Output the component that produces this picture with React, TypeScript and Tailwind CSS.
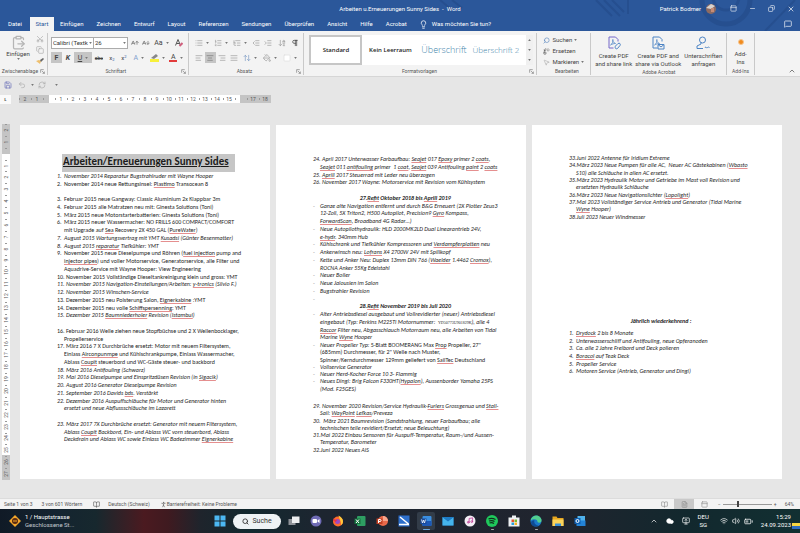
import React from "react";
import {
  AArrowDown, AArrowUp, AlignCenter, AlignJustify, AlignLeft, AlignRight, ArrowDownAZ, ArrowUpDown,
  ChevronUp, ClipboardPaste, Cloud, Copy, FileText, IndentDecrease, IndentIncrease, Lightbulb, List, ListOrdered,
  ListTree, MessageSquare, Minus, MousePointer2, Music, PaintBucket, Pilcrow, RefreshCw, Replace, Save, Scissors,
  Search, Square, Undo2, Volume2, Wifi, X, Copy as Restore, PanelTop, PersonStanding, BookOpen, BatteryMedium, MonitorUp,
} from "lucide-react";

type Item = { n?: string; i?: boolean; lines: string[] };

const pageOneItems: Item[] = [
  { n: "1.", i: true, lines: ["November 2014 Reparatur Bugstrahlruder mit Wayne Hooper"] },
  { n: "2.", lines: ["November 2014 neue Rettungsinsel: _Plastimo_ Transocean 8"] },
  { lines: [""] },
  { n: "3.", lines: ["Februar 2015 neue Gangway: Classic Aluminium 2x Klappbar 3m"] },
  { n: "4.", lines: ["Februar 2015 alle Matratzen neu mit: Ginesta Solutions (Toni)"] },
  { n: "5.", lines: ["März 2015 neue Motorstarterbatterien: Ginesta Solutions (Toni)"] },
  { n: "6.", lines: ["März 2015 neuer Wassermacher: NO FRILLS 600 COMPACT/COMFORT", "mit Upgrade auf _Sea_ Recovery 2X 450 GAL (_PureWater_)"] },
  { n: "7.", i: true, lines: ["August 2015 Wartungsvertrag mit YMT _Kusadsi_ (Günter Besenmatter)"] },
  { n: "8.", i: true, lines: ["August 2015 _reparatur_ Tiefkühler: YMT"] },
  { n: "9.", lines: ["November 2015 neue Dieselpumpe und Röhren (_fuel injection_ pump and", "_injector pipes_) und voller Motorservice, Generatorservice, alle Filter und", "Aquadrive-Service mit Wayne Hooper: View Engineering"] },
  { n: "10. ", lines: ["November 2015 Vollständige Dieseltankreinigung klein und gross: YMT"] },
  { n: "11. ", i: true, lines: ["November 2015 Navigation-Einstellungen/Arbeiten: _y-tronics_ (Silvio F.)"] },
  { n: "12. ", i: true, lines: ["November 2015 Winschen-Service"] },
  { n: "13. ", lines: ["Dezember 2015 neu Polsterung Salon, _Eignerkabine_ :YMT"] },
  { n: "14. ", lines: ["Dezember 2015 neu volle _Schiffspersenning_: YMT"] },
  { n: "15. ", i: true, lines: ["Dezember 2015 _Baumniederholer_ Revision (_Istambul_)"] },
  { lines: [""] },
  { n: "16. ", lines: ["Februar 2016 Welle ziehen neue Stopfbüchse und 2 X Wellenbocklager,", "Propellerservice"] },
  { n: "17. ", lines: ["März 2016 7 X Durchbrüche ersetzt: Motor mit neuem Filtersystem,", "Einlass _Airconpunmpe_ und Kühlschrankpumpe, Einlass Wassermacher,", "Ablass _Coupit_ steuerbord und WC-Gäste steuer- und backbord"] },
  { n: "18. ", i: true, lines: ["März 2016 Antifouling (Schwarz)"] },
  { n: "19. ", i: true, lines: ["Mai 2016 Dieselpumpe und Einspritzdüsen Revision (in _Sigacik_)"] },
  { n: "20. ", i: true, lines: ["August 2016 Generator Dieselpumpe Revision"] },
  { n: "21. ", i: true, lines: ["September 2016 Davids _bds_. Verstärkt"] },
  { n: "22. ", i: true, lines: ["Dezember 2016 Auspuffschläuche für Motor und Generator hinten", "ersetzt und neue Abflussschläuche im Lazarett"] },
  { lines: [""] },
  { n: "23. ", i: true, lines: ["März 2017 7X Durchbrüche ersetzt: Generator mit neuem Filtersystem,", "Ablass _Coupit_ Backbord, Ein- und Ablass WC vorn steuerbord, Ablass", "Deckdrain und Ablass WC sowie Einlass WC Badezimmer _Eignerkabine_"] },
];

const antifoulingItems: Item[] = [
  { n: "24. ", i: true, lines: ["April 2017 Unterwasser Farbaufbau: _Seajet_ 017 _Epoxy_ primer 2 _coats_,", "_Seajet_ 011 _antifouling_ primer  1 _coat_, _Seajet_ 039 Antifouling _paint_ 2 _coats_"] },
  { n: "25. ", i: true, lines: ["_Aprill_ 2017 Steuerrad mit Leder neu überzogen"] },
  { n: "26. ", i: true, lines: ["November 2017 Wayne: Motorservice mit Revision vom Kühlsystem"] },
];

const refit2018: Item[] = [
  { n: "-", i: true, lines: ["Ganze alte Navigation entfernt und durch B&G Erneuert (2X Plotter Zeus3", "12-Zoll, 5X Triton2, H500 Autopilot, Precision9 _Gyro_ Kompass,", "_ForwardScan_, Broadband 4G Radar…)"] },
  { n: "-", i: true, lines: ["Neue Autopilothydraulik: HLD 2000MK2LD Dual Linearantrieb 24V,", "_e-hydr_. 340mm Hub"] },
  { n: "-", i: true, lines: ["Kühlschrank und Tiefkühler Kompressoren und _Verdampferplatten_ neu"] },
  { n: "-", i: true, lines: ["Ankerwinsch neu: _Lofrans_ X4 2700W 24V mit Spillkopf"] },
  { n: "-", i: true, lines: ["Kette und Anker Neu: Duplex 13mm DIN 766 (_Waelder_ 1.4462 _Cromox_),", "ROCNA Anker 55Kg Edelstahl"] },
  { n: "-", i: true, lines: ["Neuer Boiler"] },
  { n: "-", i: true, lines: ["Neue Jalousien im Salon"] },
  { n: "-", i: true, lines: ["Bugstrahler Revision"] },
  { n: "-", lines: [""] },
];

const refit2019: Item[] = [
  { n: "-", i: true, lines: ["Alter Antriebsdiesel ausgebaut und Vollrevidierter (neuer) Antriebsdiesel", "eingebaut (Typ: Perkins M225Ti Motornummer:  ~YD50773U901829K~), alle 4", "_Raccor_ Filter neu, Abgasschlauch Motorraum neu, alle Arbeiten von Tidal", "Marine _Wyne_ Hooper"] },
];

const refit2019Rest: Item[] = [
  { n: "-", lines: ["*Neuer Propeller Typ:* 5-Blatt BOOMERANG Max _Prop_ Propeller, 27\"", "(685mm) Durchmesser, für 2\" Welle nach Muster,", "Spinner/Kerndurchmesser 129mm geliefert von _SailTec_ Deutschland"] },
  { n: "-", i: true, lines: ["Vollservice Generator"] },
  { n: "-", i: true, lines: ["Neuer Herd-Kocher Force 10 3- Flammig"] },
  { n: "-", i: true, lines: ["Neues Dingi: Brig Falcon F330HT(_Hypalon_), Aussenborder Yamaha 25PS", "(Mod. F25GES)"] },
];

const lateItems: Item[] = [
  { n: "29. ", i: true, lines: ["November 2020 Revision/Service Hydraulik-_Furlers_ Grossgenua und _Stall-_", "Sail: _WayPoint_ _Lefkas_/Preveza"] },
  { n: "30. ", i: true, lines: [" März 2021 Baumrevision (Sandstrahlung, neuer Farbaufbau; alle", "technischen teile revidiert/Ersetzt; neue Beleuchtung)"] },
  { n: "31.", i: true, lines: ["Mai 2022 Einbau Sensoren für Auspuff-Temperatur, Raum-/und Aussen-", "Temperatur, Barometer"] },
  { n: "32.", i: true, lines: ["Juni 2022 Neues AIS"] },
];

const pageThreeItems: Item[] = [
  { n: "33.", i: true, lines: ["Juni 2022 Antenne für Iridium Extreme"] },
  { n: "34.", i: true, lines: ["März 2023 Neue Pumpen für alle AC,  Neuer AC Gästekabinen (_Wbasto_", "S10) alle Schläuche in allen AC ersetzt."] },
  { n: "35.", i: true, lines: ["März 2023 Hydraulik Motor und Getriebe im Mast voll Revision und", "ersetzten Hydraulik Schläuche"] },
  { n: "36.", i: true, lines: ["März 2023 Neue Navigationslichter (_Lopolight_)"] },
  { n: "37.", i: true, lines: ["Mai 2023 Vollständiger Service Antrieb und Generator (Tidal Marine", "_Wyne_ Hooper)"] },
  { n: "38.", i: true, lines: ["Juli 2023 Neuer Windmesser"] },
];

const yearly: Item[] = [
  { n: "1.", i: true, lines: ["_Drydock_ 2 bis 8 Monate"] },
  { n: "2.", i: true, lines: ["Unterwasserschliff und Antifouling, neue Opferanoden"] },
  { n: "3.", i: true, lines: ["Ca. alle 2 Jahre Freibord und Deck polieren"] },
  { n: "4.", i: true, lines: ["_Boracol_ auf Teak Deck"] },
  { n: "5.", i: true, lines: ["Propeller Service"] },
  { n: "6.", i: true, lines: ["Motoren Service (Antrieb, Generator und Dingi)"] },
];

/* _word_ is flagged by the spell checker, *text* is italic, ~text~ is fine print */
function Marked({ text }: { text: string }) {
  return (
    <>
      {text.split(/(_[^_]+_|\*[^*]+\*|~[^~]+~)/).map((part, k) => {
        if (part.startsWith("_")) return <span key={k} className="underline decoration-[#e58f8f] decoration-1 underline-offset-1">{part.slice(1, -1)}</span>;
        if (part.startsWith("*")) return <em key={k}>{part.slice(1, -1)}</em>;
        if (part.startsWith("~")) return <small key={k} className="font-['Liberation_Serif',serif] text-[4px] not-italic">{part.slice(1, -1)}</small>;
        return part;
      })}
    </>
  );
}

function Lines({ items }: { items: Item[] }) {
  return (
    <>
      {items.map((item, k) => (
        <li key={k} className={item.i ? "contents italic" : "contents"}>
          {item.lines.map((line, j) => (
            <span key={j} className="flex whitespace-pre">
              <span className={item.n === "-" ? "min-w-[7px] text-[#999]" : "min-w-[7px]"}>{j === 0 ? item.n : ""}</span>
              <span><Marked text={line} /></span>
            </span>
          ))}
        </li>
      ))}
    </>
  );
}

function Heading({ children }: { children: React.ReactNode }) {
  return <li className="text-center font-bold italic whitespace-pre">{children}</li>;
}

function Sheet({ children }: { children: React.ReactNode }) {
  return (
    <article className="h-[354px] w-[250px] shrink-0 bg-white pr-[29px] pl-[37px] font-['Carlito','Calibri','Lato',sans-serif] text-[6px] leading-[8px] text-[#262626]">
      {children}
    </article>
  );
}

function Caret() {
  return <svg viewBox="0 0 4 3" className="h-[2px] w-[3px] shrink-0 fill-[#777]"><path d="M0 0h4L2 3z" /></svg>;
}

function Tool({ label, on, children, className = "" }: { label: string; on?: boolean; children: React.ReactNode; className?: string }) {
  return (
    <button aria-label={label} className={`flex h-[11px] items-center justify-center gap-[3px] ${on ? "bg-[#c5c5c5]" : ""} ${className}`}>
      {children}
    </button>
  );
}

function Group({ title, launcher, className = "", children }: { title: string; launcher?: boolean; className?: string; children: React.ReactNode }) {
  return (
    <section aria-label={title} className={`flex flex-col border-r border-[#c9c9c9] ${className}`}>
      <div className="flex-1">{children}</div>
      <div className="flex h-2 items-center justify-center text-[5px] leading-[8px] text-[#555]">
        <span className="flex-1 text-center whitespace-nowrap">{title}</span>
        {launcher && (
          <svg viewBox="0 0 8 8" className="mr-[2px] h-[5px] w-[5px] fill-none stroke-[#777]"><path d="M1 6V1h5M3 3l4 4M7 4v3H4" /></svg>
        )}
      </div>
    </section>
  );
}

const ic = "h-2 w-2 shrink-0";

function PdfIcon({ kind }: { kind: "link" | "mail" | "sign" }) {
  return (
    <svg viewBox="0 0 28 28" className="h-[14px] w-[14px] fill-none stroke-[#4d84c4]" strokeWidth="2">
      {kind === "sign" ? (
        <><circle cx="13" cy="8" r="6" /><path d="M10 13v3l-8 4v5h12M18 24c2-5 3 2 5-1s2 1 4 0" /></>
      ) : (
        <>
          <path d="M22 11V7l-5-5H4v22h9" className={kind === "link" ? "stroke-[#7468c9]" : ""} />
          <path d="M7 18c4-3 6-8 5-11-2 0-1 6 5 8-3 0-7 1-10 3z" strokeWidth="1.5" />
          {kind === "link" ? <path d="M16 21l6-6c3-2 6 1 4 4l-5 6c-3 2-6-1-4-4" /> : <path d="M14 17h12v9H14zM14 17l6 5 6-5" />}
        </>
      )}
    </svg>
  );
}

function Acro({ a, b, kind }: { a: string; b: string; kind: "link" | "mail" | "sign" }) {
  return (
    <button className="flex flex-col items-center whitespace-nowrap">
      <PdfIcon kind={kind} />
      <span className="mt-[2px] leading-[8px]">{a}<br />{b}</span>
    </button>
  );
}

const tabs = ["Einfügen", "Zeichnen", "Entwurf", "Layout", "Referenzen", "Sendungen", "Überprüfen", "Ansicht", "Hilfe", "Acrobat"];

function TitleBar() {
  return (
    <header className="relative h-[31px] bg-[#2b579a] text-white">
      <svg aria-hidden viewBox="0 0 400 31" className="absolute top-0 right-0 h-[31px] w-[400px] fill-none stroke-[#264f8f]">
        <circle cx="326" cy="0" r="24" strokeWidth="5" /><circle cx="326" cy="-3" r="13" strokeWidth="3" />
        <path d="M196 0l16 16M204 0l16 16M212 0l12 12M228 0v14M40 0l12 10M52 0l10 8M365 31l30-31" strokeWidth="2" />
      </svg>
      <div className="relative grid h-[17px] grid-cols-[1fr_auto_1fr] items-center">
        <span />
        <h1 className="whitespace-pre">Arbeiten u.Erneuerungen Sunny Sides  -  Word</h1>
        <div className="flex items-center justify-end pr-[5px]">
          <span className="mr-[5px]">Patrick Bodmer</span>
          <svg viewBox="0 0 10 10" className="mr-[14px] h-[10px] w-[10px]"><circle cx="5" cy="5" r="5" fill="#8d6b62" /><path d="M0 4l5-4 4 2-4 3z" fill="#d8d3cf" /><path d="M5 4h3v4H5z" fill="#c58d78" /></svg>
          <div className="flex gap-[12px]">
            <button aria-label="Menüband-Anzeigeoptionen"><PanelTop className="h-[7px] w-[7px]" /></button>
            <button aria-label="Minimieren"><Minus className="h-[7px] w-[7px]" /></button>
            <button aria-label="Verkleinern"><Restore className="h-[7px] w-[7px] rotate-90" /></button>
            <button aria-label="Schliessen"><X className="h-[8px] w-[8px]" /></button>
          </div>
        </div>
      </div>
      <nav className="relative flex h-[14px] items-center">
        <button className="w-[30px] text-center">Datei</button>
        <button className="mr-[6px] h-full w-6 bg-[#f4f4f4] text-[#2b579a]">Start</button>
        <div className="flex gap-[13px]">{tabs.map((t) => <button key={t}>{t}</button>)}</div>
        <button className="ml-3 flex items-center gap-1"><Lightbulb className="h-[9px] w-[9px]" />Was möchten Sie tun?</button>
        <button aria-label="Kommentare" className="mr-2 ml-auto"><MessageSquare className="h-2 w-2" /></button>
      </nav>
    </header>
  );
}

function Ribbon() {
  return (
    <div className="flex h-[46px] border-b border-[#d6d6d6] bg-[#f3f3f3] pt-[2px] pb-px text-[#444]">
      <Group title="Zwischenablage" launcher className="w-12">
        <div className="flex pt-[2px]">
          <button className="flex w-9 flex-col items-center"><ClipboardPaste className="h-[15px] w-[15px] text-[#b5b5b5]" strokeWidth={2} /><span>Einfügen</span><Caret /></button>
          <div className="flex flex-col gap-[3px] text-[#aaa]">
            <button aria-label="Ausschneiden"><Scissors className="h-2 w-2 -rotate-90" /></button>
            <button aria-label="Kopieren"><Copy className={ic} /></button>
            <button aria-label="Format übertragen">
              <svg viewBox="0 0 8 8" className="h-2 w-2"><path d="M0 4l4 3 1-3-2-1z" fill="#eebf6d" /><path d="M4 3l3-2 1 1-3 3z" fill="#666" /></svg>
            </button>
          </div>
        </div>
      </Group>
      <Group title="Schriftart" launcher className="w-[141px] pl-[3px]">
        <div className="flex h-[15px] items-center pt-[5px]">
          <label className="relative flex items-center"><span className="sr-only">Schriftart</span>
            <select className="h-3 w-[43px] appearance-none border border-[#ababab] bg-white pl-px text-[#333]"><option>Calibri (Textk</option></select>
            <span className="absolute right-[2px]"><Caret /></span>
          </label>
          <label className="relative -ml-px flex items-center"><span className="sr-only">Schriftgrad</span>
            <select className="h-3 w-[35px] appearance-none border border-[#ababab] bg-white pl-px text-[#333]"><option>26</option></select>
            <span className="absolute right-[2px]"><Caret /></span>
          </label>
          <Tool label="Schrift vergrössern" className="ml-[2px] w-[11px] text-[#666]"><AArrowUp className={ic} /></Tool>
          <Tool label="Schrift verkleinern" className="w-[11px] text-[#666]"><AArrowDown className={ic} /></Tool>
          <Tool label="Gross-/Kleinschreibung" className="w-[19px]"><span className="text-[7px]">Aa</span><Caret /></Tool>
          <Tool label="Formatierung löschen" className="ml-[3px] w-[11px]"><svg viewBox="0 0 16 16" className="h-2 w-2 fill-none" strokeWidth="2"><path d="M1 13L6 1l5 12M3 9h6" stroke="#555" /><path d="M9 14l6-6" stroke="#cf5f7d" strokeWidth="4" /></svg></Tool>
        </div>
        <div className="mt-[4px] flex h-[11px] items-center">
          <Tool label="Fett" on className="w-[11px] text-[7px] font-bold">F</Tool>
          <Tool label="Kursiv" className="w-3 text-[7px] font-bold italic">K</Tool>
          <Tool label="Unterstrichen" on className="w-[18px]"><span className="text-[7px] underline">U</span><Caret /></Tool>
          <Tool label="Durchgestrichen" className="w-[14px] text-[5px] line-through">abc</Tool>
          <Tool label="Tiefgestellt" className="w-3"><span>x<sub className="text-[4px] text-[#2b579a]">2</sub></span></Tool>
          <Tool label="Hochgestellt" className="w-3"><span>x<sup className="text-[4px] text-[#2b579a]">2</sup></span></Tool>
          <Tool label="Texteffekte" className="w-[18px]"><span className="text-[7px] text-[#7f9fce]">A</span><Caret /></Tool>
          <Tool label="Texthervorhebung" className="w-[19px]"><svg viewBox="0 0 9 9" className="h-[9px] w-[9px]"><path d="M0 6h9v3H0z" fill="#f7f03a" /><path d="M1 5l5-4 2 2-4 3z" fill="#888" /></svg><Caret /></Tool>
          <Tool label="Schriftfarbe" className="w-[19px]"><span className="flex h-[9px] w-2 items-center justify-center border-b-2 border-[#e23b3b] text-[7px]">A</span><Caret /></Tool>
        </div>
      </Group>
      <Group title="Absatz" launcher className="w-[116px] pl-1">
        <div className="flex h-[15px] items-center pt-[5px] text-[#999]">
          <Tool label="Aufzählung" className="w-[19px]"><List className={ic} /><Caret /></Tool>
          <Tool label="Nummerierung" className="w-[19px]"><ListOrdered className={ic} /><Caret /></Tool>
          <Tool label="Liste mit mehreren Ebenen" className="w-[19px]"><ListTree className={ic} /><Caret /></Tool>
          <Tool label="Einzug verkleinern" className="w-3"><IndentDecrease className={ic} /></Tool>
          <Tool label="Einzug vergrössern" className="w-3"><IndentIncrease className={ic} /></Tool>
          <Tool label="Sortieren" className="ml-[2px] w-3"><ArrowDownAZ className={ic} /></Tool>
          <Tool label="Absatzmarken" className="ml-px w-3 text-[#333]"><Pilcrow className={ic} /></Tool>
        </div>
        <div className="mt-[4px] flex h-[11px] items-center text-[#999]">
          <Tool label="Linksbündig" className="w-3"><AlignLeft className={ic} /></Tool>
          <Tool label="Zentriert" on className="w-[11px] text-[#777]"><AlignCenter className={ic} /></Tool>
          <Tool label="Rechtsbündig" className="w-3"><AlignRight className={ic} /></Tool>
          <Tool label="Blocksatz" className="w-3"><AlignJustify className={ic} /></Tool>
          <Tool label="Zeilenabstand" className="w-[20px] text-[#7c9bc4]"><ArrowUpDown className={ic} /><Caret /></Tool>
          <Tool label="Schattierung" className="w-[20px]"><PaintBucket className={ic} /><Caret /></Tool>
          <Tool label="Rahmen" className="w-[20px]"><Square className="h-2 w-2 fill-white text-[#ddd]" /><Caret /></Tool>
        </div>
      </Group>
      <Group title="Formatvorlagen" launcher className="min-w-[233px] flex-1 pl-[5px]">
        <div className="mt-[2px] mr-[3px] flex h-[30px] items-center bg-white font-['Open_Sans',sans-serif]">
          <button className="h-full w-[53px] border-2 border-[#c6c6c6] font-semibold text-[#222]">Standard</button>
          <button className="w-[56px] font-semibold text-[#222]">Kein Leerraum</button>
          <button className="w-[51px] text-[9px] font-light text-[#3f86ab]">Überschrift</button>
          <button className="w-[53px] text-[8px] font-light whitespace-nowrap text-[#3f86ab]">Überschrift 2</button>
          <div className="ml-auto flex h-full w-[7px] flex-col justify-around bg-[#f0f0f0] text-center">
            <button aria-label="Nach oben" className="flex h-2 rotate-180 items-center justify-center"><Caret /></button>
            <button aria-label="Nach unten" className="flex h-2 items-center justify-center"><Caret /></button>
            <button aria-label="Mehr" className="flex h-2 items-center justify-center"><Caret /></button>
          </div>
        </div>
      </Group>
      <Group title="Bearbeiten" className="w-[54px] pl-[6px]">
        <div className="flex flex-col items-start gap-[3px] pt-[3px] leading-[8px]">
          <button className="flex items-center gap-[2px]"><Search className="h-[7px] w-[7px] -scale-x-100 text-[#4f7fbb]" />Suchen<Caret /></button>
          <button className="flex items-center gap-[2px]"><Replace className="h-[7px] w-[7px]" />Ersetzen</button>
          <button className="flex items-center gap-[2px]"><MousePointer2 className="h-[7px] w-[7px] text-[#aaa]" />Markieren<Caret /></button>
        </div>
      </Group>
      <Group title="Adobe Acrobat" className="w-[136px]">
        <div className="flex justify-center gap-[3px] pt-[3px]">
          <Acro a="Create PDF" b="and share link" kind="link" />
          <Acro a="Create PDF and" b="share via Outlook" kind="mail" />
          <Acro a="Unterschriften" b="anfragen" kind="sign" />
        </div>
      </Group>
      <Group title="Add-Ins" className="w-[28px]">
        <button className="flex w-full flex-col items-center pt-[6px] leading-[8px]">
          <span className="mb-[5px] h-[6px] w-[6px] rounded-full border border-[#f6c48c] bg-[#f08a1d]" />
          <span>Add-<br />Ins</span>
        </button>
      </Group>
      <div className="flex w-[45px] items-end justify-end pr-1"><button aria-label="Menüband reduzieren"><ChevronUp className="h-2 w-2" /></button></div>
    </div>
  );
}

const rulerColumns = ["2", "1", "", "1", "2", "3", "4", "5", "6", "7", "8", "9", "10", "11", "12", "13", "14", "15", "", "17", "18"];
const rulerRows = ["2", "1", "", ...Array.from({ length: 27 }, (_, k) => String(k + 1))];

function HorizontalRuler() {
  return (
    <div className="flex h-3 items-center text-[5px] leading-[8px] text-[#555]">
      <div className="flex h-[9px] w-[11px] items-center justify-center bg-[#fafafa] font-bold">ʟ</div>
      <div className="ml-2 flex h-2 bg-[linear-gradient(90deg,#c4c4c4_30px,#fff_30px,#fff_221px,#c4c4c4_221px)]">
        {rulerColumns.map((n, k) => (
          <span key={k} className="relative w-3 text-center">{n}
            <span className="absolute top-[3px] left-0 h-[2px] w-px bg-[#999]" />
          </span>
        ))}
      </div>
    </div>
  );
}

function VerticalRuler() {
  return (
    <div className="mt-[19px] ml-[2px] grid h-[356px] w-2 shrink-0 auto-rows-fr bg-[linear-gradient(180deg,#c4c4c4_30px,#fff_30px,#fff_331px,#c4c4c4_331px)] text-[5px] leading-[8px] text-[#555]">
      {rulerRows.map((n, k) => (
        <span key={k} className="relative flex items-center justify-center">
          <span className="-rotate-90">{n}</span>
          <span className="absolute top-0 left-[3px] h-px w-[2px] bg-[#999]" />
        </span>
      ))}
    </div>
  );
}

function StatusBar() {
  return (
    <footer className="flex h-[11px] items-center border-t border-[#dcdcdc] bg-[#f3f3f3] pl-1 text-[5px] text-[#555]">
      <span className="mr-[9px]">Seite 1 von 3</span>
      <span className="mr-[11px]">3 von 601 Wörtern</span>
      <BookOpen className="mr-[8px] h-[7px] w-[7px]" />
      <span className="mr-[10px]">Deutsch (Schweiz)</span>
      <PersonStanding className="h-[7px] w-[7px]" />
      <span>Barrierefreiheit: Keine Probleme</span>
      <div className="ml-auto flex h-full items-center">
        <button aria-label="Lesemodus" className="flex h-full w-5 items-center justify-center text-[#888]"><BookOpen className="h-[7px] w-[7px]" /></button>
        <button aria-label="Seitenlayout" className="flex h-full w-5 items-center justify-center bg-[#c9c9c9] text-[#888]"><FileText className="h-[7px] w-[7px]" /></button>
        <button aria-label="Weblayout" className="mr-1 flex h-full w-5 items-center justify-center text-[#888]"><PanelTop className="h-[7px] w-[7px]" /></button>
        <button aria-label="Verkleinern">−</button>
        <input type="range" aria-label="Zoom" min={0} max={100} defaultValue={30}
          className="mx-[2px] h-[7px] w-[49px] appearance-none bg-[linear-gradient(#999,#999)] bg-[length:100%_1px] bg-center bg-no-repeat [&::-webkit-slider-thumb]:h-[6px] [&::-webkit-slider-thumb]:w-[2px] [&::-webkit-slider-thumb]:appearance-none [&::-webkit-slider-thumb]:bg-[#444]" />
        <button aria-label="Vergrössern">+</button>
        <span className="mr-[6px] ml-[8px]">64%</span>
      </div>
    </footer>
  );
}

function AppIcon({ label, active, running, children }: { label: string; active?: boolean; running?: boolean; children: React.ReactNode }) {
  return (
    <button aria-label={label} className={`relative flex h-[18px] w-[18px] items-center justify-center rounded-xs ${active ? "bg-[#323c48]" : ""}`}>
      <svg viewBox="0 0 24 24" className="h-3 w-3">{children}</svg>
      {active && <span className="absolute bottom-0 h-px w-[7px] rounded-full bg-[#6aa6dc]" />}
      {running && <span className="absolute bottom-0 h-px w-[3px] rounded-full bg-[#aaa]" />}
    </button>
  );
}

function Taskbar() {
  return (
    <div className="grid h-6 grid-cols-[211px_auto_1fr] items-center bg-[linear-gradient(90deg,#101a26_0%,#142430_7%,#17282e_12%,#4b1a20_18%,#3f1a20_21%,#1f242c_25%,#12292f_31%,#1d2530_40%,#20242e_70%,#12282e_86%,#123032_100%)] text-white">
      <div className="flex items-center gap-1 pl-[9px]">
        <svg viewBox="0 0 12 12" className="h-3 w-3"><path d="M6 0l6 6-6 6-6-6z" fill="#f2a62b" /><circle cx="6" cy="6" r="3" fill="#5a2a12" /><path d="M4 6h4" stroke="#f2a62b" /></svg>
        <p className="leading-[8px] whitespace-nowrap">1 / Hauptstrasse<br /><span className="text-[#c5cad0]">Geschlossene St...</span></p>
      </div>
      <div className="flex items-center gap-[4px]">
        <AppIcon label="Start"><path d="M1 1h10v10H1zM13 1h10v10H13zM1 13h10v10H1zM13 13h10v10H13z" fill="#4cb8f2" /></AppIcon>
        <button className="flex h-[15px] w-12 items-center justify-center gap-[3px] rounded-full bg-[#eef3f5] text-[7px] text-[#333]"><Search className="h-[7px] w-[7px]" strokeWidth={3} />Suche</button>
        <AppIcon label="Taskansicht"><path d="M1 8h14v12H1z" fill="#8e9298" /><path d="M8 3h15v13H8z" fill="#eceef0" /></AppIcon>
        <AppIcon label="Chat"><circle cx="12" cy="12" r="11" fill="#6f6bb5" /><rect x="5" y="8" width="9" height="8" rx="2" fill="#fff" /><path d="M15 11l4-3v8l-4-3z" fill="#fff" /></AppIcon>
        <AppIcon label="Firefox"><circle cx="12" cy="13" r="10" fill="#ff6a2c" /><path d="M13 1c6 3 9 7 9 12 0 3-2 6-4 7 1-8-3-10-5-19z" fill="#ffc83c" /><circle cx="11" cy="13" r="5" fill="#9a4bc4" /><path d="M3 5c1 5 4 4 8 5-2 1-3 2-3 4l-5-2z" fill="#e8304c" /></AppIcon>
        <AppIcon label="Excel"><rect x="6" y="2" width="17" height="20" rx="2" fill="#2e9e62" /><rect x="1" y="7" width="12" height="11" fill="#15713d" /><path d="M4 9l6 7M10 9l-6 7" stroke="#fff" strokeWidth="2" /></AppIcon>
        <AppIcon label="PowerPoint"><circle cx="14" cy="12" r="10" fill="#e8694a" /><path d="M14 2a10 10 0 0 1 10 10H14z" fill="#f7a58c" /><rect x="1" y="7" width="12" height="11" fill="#c13f22" /><path d="M5 16V9h3c3 0 3 4 0 4H5" stroke="#fff" strokeWidth="2" fill="none" /></AppIcon>
        <AppIcon label="Scanner"><path d="M1 1h22v22H1z" fill="#2d6fcb" /><path d="M4 4l17 14M2 19h20" stroke="#fff" strokeWidth="3" /></AppIcon>
        <AppIcon label="Word" active><rect x="5" y="2" width="18" height="20" rx="2" fill="#3a8ee0" /><path d="M5 12h18v8a2 2 0 0 1-2 2H5z" fill="#1c58b5" /><rect x="1" y="7" width="12" height="11" fill="#174a9c" /><path d="M3 9l2 7 2-6 2 6 2-7" stroke="#fff" strokeWidth="1.5" fill="none" /></AppIcon>
        <AppIcon label="Mail"><path d="M1 4h22v17H1z" fill="#1b6fb8" /><path d="M1 4l11 9 11-9v17H1z" fill="#45b4ec" /><path d="M1 4h22l-11 8z" fill="#1d7cc6" /></AppIcon>
        <AppIcon label="iTunes"><circle cx="12" cy="12" r="11" fill="#f3eef5" /><Music x="5" y="4" width="14" height="14" color="#c2479d" strokeWidth={3} /></AppIcon>
        <AppIcon label="Spotify" running><circle cx="12" cy="12" r="12" fill="#1fc95c" /><path d="M5 8c5-2 10-1 14 1M6 12c4-1 8-1 11 1M7 16c3-1 6-1 9 1" stroke="#10301c" strokeWidth="2.5" fill="none" /></AppIcon>
        <AppIcon label="Microsoft Store"><path d="M1 5h22v18H1zM8 1h8v4H8z" fill="#eef1f3" /><path d="M7 9h5v5H7z" fill="#e8512c" /><path d="M13 9h5v5h-5z" fill="#7db82c" /><path d="M7 15h5v5H7z" fill="#2aa0da" /><path d="M13 15h5v5h-5z" fill="#f4b52a" /></AppIcon>
        <AppIcon label="Edge" running><circle cx="12" cy="12" r="11" fill="#1a78c8" /><path d="M1 11C3 3 9 0 15 1c6 2 9 7 8 11-1 4-6 4-8 2 1-5-7-8-14-3z" fill="#52cf8f" /><path d="M9 11c-2 5 2 10 8 10-6 4-14 1-15-5 0-4 4-6 7-5z" fill="#0e4b94" /></AppIcon>
        <AppIcon label="Explorer"><path d="M1 3h8l2 3h12v16H1z" fill="#e8a61f" /><path d="M1 9h22v13H1z" fill="#fbd45c" /><path d="M6 17h12v5H6z" fill="#3a8fd8" /></AppIcon>
        <AppIcon label="Outlook"><rect x="7" y="2" width="15" height="12" fill="#4fb2ec" /><path d="M5 11h18v11H5z" fill="#2383d6" /><rect x="1" y="6" width="12" height="12" fill="#0f5fb0" /><circle cx="7" cy="12" r="3" stroke="#fff" strokeWidth="2" fill="none" /></AppIcon>
      </div>
      <div className="flex items-center justify-end pr-1 text-center leading-[8px]">
        <ChevronUp className="mr-2 h-2 w-2" />
        <Cloud className="mr-2 h-2 w-2 fill-white" />
        <MonitorUp className="mr-2 h-2 w-2" />
        <span className="mr-[11px]">DEU<br />SG</span>
        <Wifi className="mr-1 h-2 w-2" />
        <Volume2 className="mr-1 h-2 w-2" />
        <BatteryMedium className="mr-2 h-[9px] w-[9px]" />
        <div className="relative pr-[5px] text-right">15:29<br />24.09.2023
          <svg viewBox="0 0 8 6" className="absolute -right-1 bottom-0 h-[6px] w-2"><path d="M0 0h8v3H0z" fill="#f6d743" /><path d="M0 3h8v3H0z" fill="#2d6fc4" /></svg>
        </div>
      </div>
    </div>
  );
}

export default function App() {
  return (
    <div className="flex min-h-screen flex-col bg-[#e6e6e6] font-['Roboto','Open_Sans',sans-serif] text-[6px] leading-[8px]">
      <TitleBar />
      <Ribbon />
      <div className="flex h-4 items-center pl-1 text-[#aaa]">
        <button aria-label="Speichern" className="mr-[6px]"><Save className="h-2 w-2 text-[#6a70b8]" /></button>
        <button aria-label="Rückgängig" className="mr-[5px]"><Undo2 className="h-2 w-2" /></button>
        <Caret />
        <button aria-label="Wiederholen" className="mx-[4px]"><RefreshCw className="h-2 w-2" /></button>
        <span className="ml-[5px]"><Caret /></span>
      </div>
      <HorizontalRuler />
      <main className="flex flex-1 overflow-hidden">
        <VerticalRuler />
        <div className="flex gap-[6px] pt-5 pb-[19px] pl-[10px]">
          <Sheet>
            <div className="pt-[29px]">
              <h2 className="ml-[5px] h-[18px] w-[173px] bg-[#c6c6c6] pl-px text-[11px] leading-[15px] font-bold whitespace-nowrap text-[#1c1c1c] underline">Arbeiten/Erneuerungen Sunny Sides</h2>
              <ol className="grid h-[271px] auto-rows-fr"><Lines items={pageOneItems} /></ol>
            </div>
          </Sheet>
          <Sheet>
            <ol className="mt-[30px] grid h-[186px] auto-rows-fr">
              <Lines items={antifoulingItems} />
              <li />
              <Heading>27.<Marked text="_Refit_" /> Oktober 2018 bis <Marked text="_Aprill_" /> 2019</Heading>
              <Lines items={refit2018} />
              <Heading>28.<Marked text="_Refit_" /> November 2019 bis Juli 2020</Heading>
              <Lines items={refit2019} />
            </ol>
            <ol className="grid h-[51px] auto-rows-fr"><Lines items={refit2019Rest} /></ol>
            <ol className="mt-[10px] grid h-[51px] auto-rows-fr"><Lines items={lateItems} /></ol>
          </Sheet>
          <Sheet>
            <ol className="mt-[29px] grid h-[66px] auto-rows-fr"><Lines items={pageThreeItems} /></ol>
            <h3 className="mt-[97px] text-center font-bold italic">Jährlich wiederkehrend :</h3>
            <ol className="mt-1 grid h-[46px] auto-rows-fr"><Lines items={yearly} /></ol>
          </Sheet>
        </div>
      </main>
      <StatusBar />
      <Taskbar />
    </div>
  );
}
